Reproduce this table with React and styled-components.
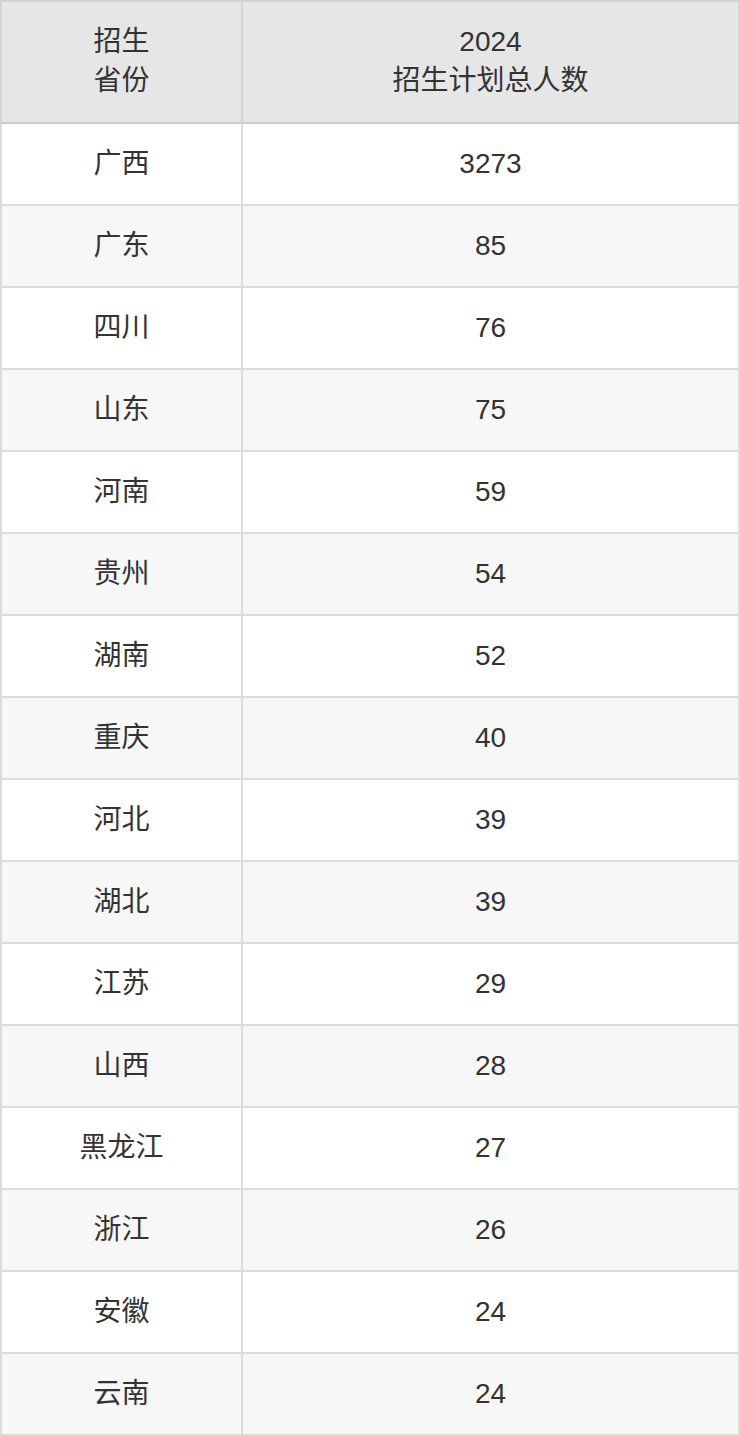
import React from 'react';
import styled, { createGlobalStyle } from 'styled-components';

const GlobalStyle = createGlobalStyle`
  html, body {
    margin: 0;
    padding: 0;
    background: #fff;
  }
  body {
    font-family: "Liberation Sans", Arial, "Noto Sans CJK SC", sans-serif;
    color: #333;
  }
`;

const rows = [
  ['广西', '3273'],
  ['广东', '85'],
  ['四川', '76'],
  ['山东', '75'],
  ['河南', '59'],
  ['贵州', '54'],
  ['湖南', '52'],
  ['重庆', '40'],
  ['河北', '39'],
  ['湖北', '39'],
  ['江苏', '29'],
  ['山西', '28'],
  ['黑龙江', '27'],
  ['浙江', '26'],
  ['安徽', '24'],
  ['云南', '24'],
];

const Table = styled.table`
  width: 740px;
  border-collapse: collapse;
  table-layout: fixed;
  font-size: 28px;
  line-height: 39px;
  text-align: center;
`;

const HeadCell = styled.th`
  height: 118px;
  padding: 0 0 2px;
  font-weight: normal;
  background: #e6e6e6;
  border: 2px solid #d4d4d4;
  border-bottom-color: #cccccc;
`;

const Row = styled.tr`
  background: ${(p) => (p.$striped ? '#f7f7f7' : '#ffffff')};
`;

const Cell = styled.td`
  height: 79px;
  padding: 0 0 1px;
  border: 2px solid #dcdcdc;
`;

export default function App() {
  return (
    <>
      <GlobalStyle />
      <Table>
        <colgroup>
          <col style={{ width: 241 }} />
          <col />
        </colgroup>
        <thead>
          <tr>
            <HeadCell>招生<br />省份</HeadCell>
            <HeadCell>2024<br />招生计划总人数</HeadCell>
          </tr>
        </thead>
        <tbody>
          {rows.map(([prov, num], i) => (
            <Row key={prov + i} $striped={i % 2 === 1}>
              <Cell>{prov}</Cell>
              <Cell>{num}</Cell>
            </Row>
          ))}
        </tbody>
      </Table>
    </>
  );
}
